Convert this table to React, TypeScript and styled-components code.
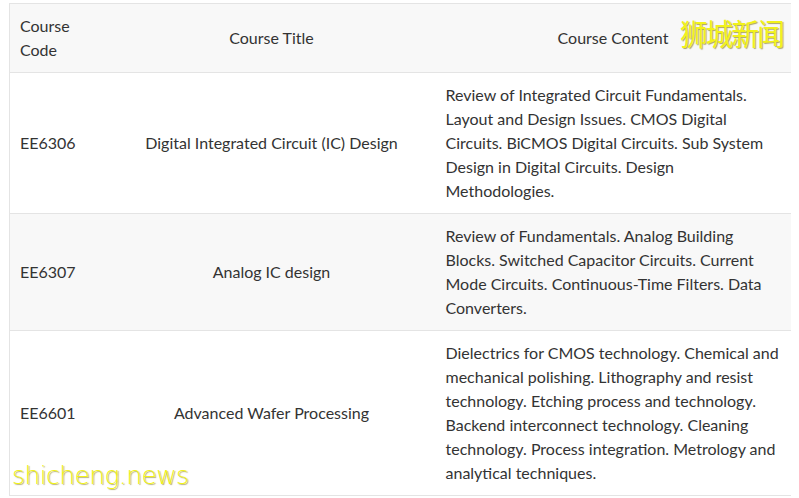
import React from "react";
import styled, { createGlobalStyle } from "styled-components";

const Global = createGlobalStyle`
  html, body { margin: 0; padding: 0; background: #ffffff; }
  body { font-family: Lato, "Liberation Sans", sans-serif; color: #333333; }
`;

const Page = styled.div`
  position: relative;
  width: 799px;
  height: 498px;
  overflow: hidden;
  padding: 3px 0 0 9px;
  box-sizing: border-box;
  background: #ffffff;
`;

const Table = styled.table`
  width: 781px;
  border-collapse: collapse;
  table-layout: fixed;
  border-top: 1px solid #e4e4e4;
  border-left: 1px solid #e4e4e4;
  font-size: 16px;
  line-height: 24px;
`;

const Row = styled.tr<{ $shade?: boolean }>`
  background: ${(p) => (p.$shade ? "#f8f8f8" : "#ffffff")};
  border-bottom: 1px solid #e4e4e4;
`;

const HeadCell = styled.th<{ $align: "left" | "center" | "right" }>`
  font-weight: 400;
  padding: 10px;
  text-align: ${(p) => p.$align};
  vertical-align: middle;
`;

const Cell = styled.td<{ $align: "left" | "center" }>`
  padding: 10px;
  text-align: ${(p) => p.$align};
  vertical-align: middle;
`;

const WatermarkCN = styled.div`
  position: absolute;
  top: 12px;
  left: 680px;
  font-family: "Noto Sans CJK SC", sans-serif;
  font-size: 30px;
  line-height: 40px;
  letter-spacing: -2px;
  color: #f2f21a;
  transform: scaleX(0.92);
  transform-origin: left center;
  text-shadow: 1px 1px 1px rgba(120, 110, 0, 0.6);
`;

const WatermarkEN = styled.div`
  position: absolute;
  top: 459px;
  left: 12px;
  font-family: "DejaVu Sans", sans-serif;
  font-size: 25px;
  font-weight: 300;
  line-height: 34px;
  letter-spacing: -0.6px;
  color: #f2f21a;
  text-shadow: 1px 1px 1px rgba(120, 110, 0, 0.55);
`;

const rows = [
  {
    code: "EE6306",
    title: "Digital Integrated Circuit (IC) Design",
    content:
      "Review of Integrated Circuit Fundamentals. Layout and Design Issues. CMOS Digital Circuits. BiCMOS Digital Circuits. Sub System Design in Digital Circuits. Design Methodologies.",
  },
  {
    code: "EE6307",
    title: "Analog IC design",
    content:
      "Review of Fundamentals. Analog Building Blocks. Switched Capacitor Circuits. Current Mode Circuits. Continuous-Time Filters. Data Converters.",
  },
  {
    code: "EE6601",
    title: "Advanced Wafer Processing",
    content:
      "Dielectrics for CMOS technology. Chemical and mechanical polishing. Lithography and resist technology. Etching process and technology. Backend interconnect technology. Cleaning technology. Process integration. Metrology and analytical techniques.",
  },
];

export default function App() {
  return (
    <>
      <Global />
      <Page>
        <Table>
          <colgroup>
            <col style={{ width: 98 }} />
            <col style={{ width: 328 }} />
            <col style={{ width: 355 }} />
          </colgroup>
          <thead>
            <Row $shade>
              <HeadCell $align="left">Course Code</HeadCell>
              <HeadCell $align="center">Course Title</HeadCell>
              <HeadCell $align="center">Course Content</HeadCell>
            </Row>
          </thead>
          <tbody>
            {rows.map((r, i) => (
              <Row key={r.code} $shade={i % 2 === 1}>
                <Cell $align="left">{r.code}</Cell>
                <Cell $align="center">{r.title}</Cell>
                <Cell $align="left">{r.content}</Cell>
              </Row>
            ))}
          </tbody>
        </Table>
        <WatermarkCN>狮城新闻</WatermarkCN>
        <WatermarkEN>shicheng.news</WatermarkEN>
      </Page>
    </>
  );
}
